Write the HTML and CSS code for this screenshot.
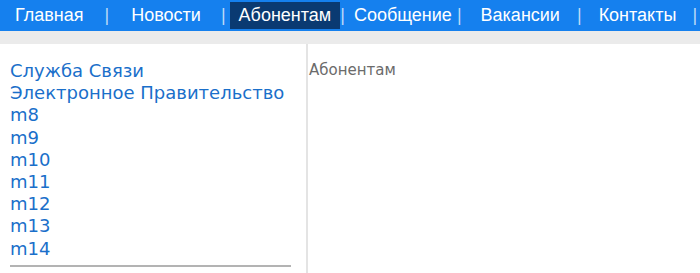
FILE: index.html
```html
<html>

<head>
    <title>Абонентам</title>
    <link rel="stylesheet" href="styles.css">
</head>

<body>
    <div class="menu">
        <a class="item i1" href="#">Главная</a><span class="sep s1">|</span>
        <a class="item i2" href="#">Новости</a><span class="sep s2">|</span>
        <a class="item active" href="#">Абонентам</a><span class="sep s3">|</span>
        <a class="item i4" href="#">Сообщение</a><span class="sep s4">|</span>
        <a class="item i5" href="#">Вакансии</a><span class="sep s5">|</span>
        <a class="item i6" href="#">Контакты</a><span class="sep s6">|</span>
    </div>
    <div class="strip"></div>
    <div class="main">
        <div class="side">
            <div class="links">
                <a href="#">Служба Связи</a>
                <a href="#">Электронное Правительство</a>
                <a href="#">m8</a>
                <a href="#">m9</a>
                <a href="#">m10</a>
                <a href="#">m11</a>
                <a href="#">m12</a>
                <a href="#">m13</a>
                <a href="#">m14</a>
            </div>
            <hr class="line">
        </div>
        <div class="content">Абонентам</div>
    </div>
</body>

</html>
```
FILE: styles.css
```css
body {
    margin: 0;
    background-color: #ffffff;
    font-family: "Liberation Sans", Arial, sans-serif;
    overflow: hidden;
}

.menu {
    background-color: #1580ee;
    height: 31px;
    display: flex;
    align-items: center;
    padding-left: 8px;
    white-space: nowrap;
}

.item {
    color: #ffffff;
    text-decoration: none;
    font-size: 18px;
    padding: 3px 7px 3px 7px;
}

.active {
    background-color: #0a3a72;
    padding: 3px 9px 3px 9px;
}

.sep {
    color: #bcd9f7;
    font-size: 18px;
}

.s1 { margin: 0 15px 0 14px; }
.s2 { margin: 0 4px 0 13px; }
.s3 { margin: 0 2px 0 0; }
.s4 { margin: 0 12px 0 -2px; }
.s5 { margin: 0 10px 0 10px; }
.s6 { margin: 0 0 0 9px; }

.strip {
    background-color: #ebebeb;
    height: 13px;
}

.main {
    display: flex;
    height: 229px;
}

.side {
    width: 296px;
    padding: 16px 0 0 10px;
    border-right: 2px solid #e4e4e4;
}

.links {
    display: flex;
    flex-direction: column;
}

.links a {
    font-family: "DejaVu Sans", Verdana, sans-serif;
    font-size: 18px;
    line-height: 22.2px;
    color: #1a6fca;
    text-decoration: none;
}

.line {
    width: 281px;
    margin: 5px 0 0 0;
    border: none;
    border-top: 2px solid #b3b3b3;
}

.content {
    font-family: "DejaVu Sans", Verdana, sans-serif;
    font-size: 15px;
    color: #6b6b6b;
    padding: 17px 0 0 1px;
}
```
